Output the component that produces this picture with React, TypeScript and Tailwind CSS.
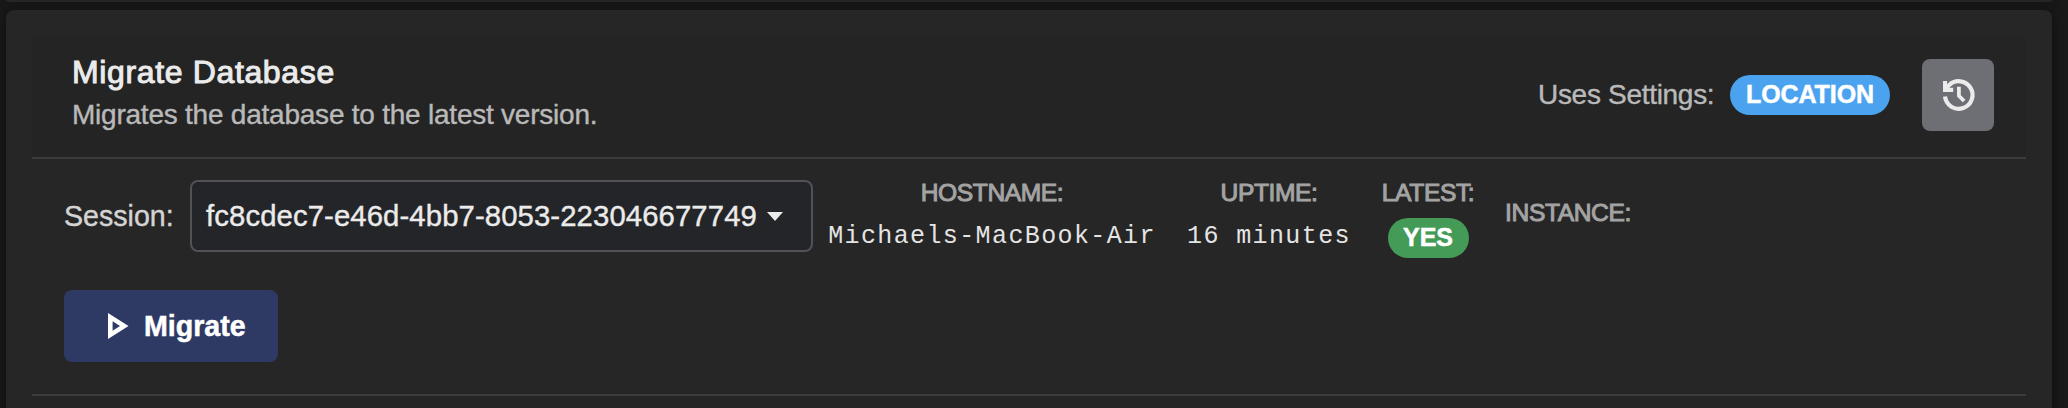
import React from "react";

function Stat({ label, className, children }: { label: string; className: string; children?: React.ReactNode }) {
  return (
    <div className={`flex shrink-0 flex-col items-center whitespace-nowrap ${className}`}>
      <div className="h-[39px] text-[24.6px] leading-[28px] tracking-[-0.4px] text-[#a3a3a3] [-webkit-text-stroke:1px_#a3a3a3]">{label}</div>
      {children}
    </div>
  );
}

export default function App() {
  return (
    <div className="flex h-[408px] w-[2068px] flex-col gap-2 overflow-hidden bg-[#191919] pl-[6px] pr-[16px] font-['Liberation_Sans',Arial,sans-serif]">
      <div className="h-[2px] shrink-0 rounded-b-[8px] bg-[#262626] shadow-[0_2px_8px_rgba(0,0,0,0.4)]" />
      <div className="h-[420px] shrink-0 rounded-[8px] bg-[#262626] px-[26px] pt-[26px] shadow-[0_2px_12px_rgba(0,0,0,0.45)]">
        <header className="flex h-[123px] items-start justify-between border-b-2 border-[#3c3c3c] bg-[#242424] pl-[40px] pr-[32px] pt-[16px]">
          <div className="whitespace-nowrap">
            <h1 className="text-[32px] leading-[40px] tracking-[0.64px] text-[#ebebeb] [-webkit-text-stroke:1px_#ebebeb]">Migrate Database</h1>
            <p className="pt-[6px] text-[28px] leading-[34px] tracking-[-0.23px] text-[#b9b9b9] [-webkit-text-stroke:0.4px_#b9b9b9]">Migrates the database to the latest version.</p>
          </div>
          <div className="flex items-center pt-[7px]">
            <span className="w-[192px] whitespace-nowrap text-[28px] leading-[36px] tracking-[-0.3px] text-[#b9b9b9] [-webkit-text-stroke:0.4px_#b9b9b9]">Uses Settings:</span>
            <span className="flex h-[40px] w-[160px] items-center justify-center rounded-full bg-[#4ba3f0] text-[25px] font-bold tracking-[-0.1px] text-white [-webkit-text-stroke:0.5px_#fff]">LOCATION</span>
            <button className="ml-[32px] flex size-[72px] items-center justify-center rounded-[8px] bg-[#6e6f75]">
              <svg className="overflow-visible" width="32" height="32" viewBox="0 0 32 32" fill="none" stroke="#ebebeb">
                <path d="M3 17.6A13.8 13.8 0 1 0 7 6.2L3.4 9.8" strokeWidth="4.2" />
                <path d="M1 2h4.1v6.8h6.1v4.2H1Z" fill="#ebebeb" stroke="none" />
                <path d="M16.9 7.8v9l5.2 5.2" strokeWidth="3.8" />
              </svg>
            </button>
          </div>
        </header>
        <section className="h-[237px] border-b-2 border-[#3c3c3c] pl-[32px] pt-[21px]">
          <div className="flex h-[110px] items-start">
            <label className="w-[126px] pt-[18px] text-[28.6px] leading-[36px] text-[#d4d4d4] [-webkit-text-stroke:0.4px_#d4d4d4]">Session:</label>
            <div className="flex h-[72px] w-[623px] items-center rounded-[8px] border-2 border-[#515257] bg-[#242528] pl-[14px] text-[29.3px] tracking-[0.1px] text-[#ebebeb]">
              <span className="w-[561px] whitespace-nowrap [-webkit-text-stroke:0.4px_#ebebeb]">fc8cdec7-e46d-4bb7-8053-223046677749</span>
              <svg width="16" height="9" viewBox="0 0 16 9" fill="#ebebeb"><path d="M0 0h16L8 9Z" /></svg>
            </div>
            <Stat label="HOSTNAME:" className="-mt-px ml-[15px] w-[328px]">
              <span className="font-['Liberation_Mono',monospace] text-[25px] leading-[38px] tracking-[1.38px] text-[#e4e4e4]">Michaels-MacBook-Air</span>
            </Stat>
            <Stat label="UPTIME:" className="-mt-px ml-[31px] w-[164px]">
              <span className="font-['Liberation_Mono',monospace] text-[25px] leading-[38px] tracking-[1.38px] text-[#e4e4e4]">16 minutes</span>
            </Stat>
            <Stat label="LATEST:" className="-mt-px ml-[31px] w-[92px]">
              <span className="flex h-[40px] w-[81px] items-center justify-center rounded-full bg-[#449a57] text-[25px] font-bold text-white [-webkit-text-stroke:0.5px_#fff]">YES</span>
            </Stat>
            <Stat label="INSTANCE:" className="ml-[31px] w-[126px] pt-[19px]" />
          </div>
          <button className="flex h-[72px] w-[214px] items-center rounded-[8px] bg-[#2e3a64] pl-[44px] text-[28.6px] font-bold text-white [-webkit-text-stroke:0.5px_#fff]">
            <svg className="mr-[15px]" width="21" height="26" viewBox="0 0 21 26"><path fillRule="evenodd" fill="#fff" d="M0 0 20.5 13 0 26ZM4.6 8.3v9.4L12 13Z" /></svg>
            Migrate
          </button>
        </section>
      </div>
    </div>
  );
}
